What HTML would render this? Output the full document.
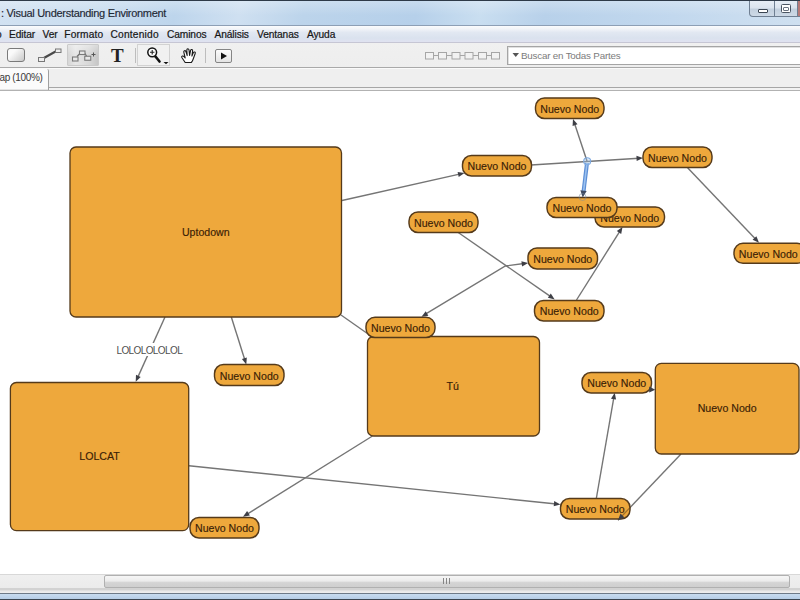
<!DOCTYPE html>
<html><head><meta charset="utf-8">
<style>
*{margin:0;padding:0;box-sizing:border-box}
html,body{width:800px;height:600px;overflow:hidden;background:#fff;font-family:"Liberation Sans",sans-serif}
.abs{position:absolute}
#title{left:0;top:0;width:800px;height:26px;background:linear-gradient(rgba(255,255,255,0.25),rgba(255,255,255,0) 60%),linear-gradient(100deg,#d2e2f2 0%,#c9ddef 12%,#bdd5ec 22%,#cfe0f1 30%,#bcd4eb 38%,#b6d0ea 52%,#c9def0 60%,#b8d1ea 68%,#c2d8ee 84%,#cfe0f0 100%);border-top:1px solid #2e3a48;border-bottom:1px solid #8d9fb5}
#title .t{left:1px;top:6px;font-size:11px;color:#1e2834;-webkit-text-stroke:0.15px #1e2834;letter-spacing:-0.3px;white-space:nowrap}
#wbtn{left:749px;top:1px;width:51px;height:16px;border:1px solid #6f7f92;border-top:none;border-radius:0 0 0 4px;background:linear-gradient(#e6edf5,#dbe4ee 45%,#c3d0de 55%,#cdd9e6)}
#menu{left:0;top:26px;width:800px;height:17px;background:linear-gradient(#fbfcfd,#f2f4f8 18%,#e2e8f2 40%,#dae2ee 75%,#e0e2f0);border-bottom:1px solid #c6c6d4}
#menu span{position:absolute;top:3px;font-size:10.2px;letter-spacing:-0.1px;color:#161616;-webkit-text-stroke:0.2px #161616;white-space:nowrap}
#tool{left:0;top:43px;width:800px;height:25px;background:linear-gradient(#f0f0f0,#eeeeee);border-bottom:1px solid #a9a9a9}
#tabs{left:0;top:68px;width:800px;height:23px;background:linear-gradient(#fafafa 0,#fafafa 1px,#efefef 1px,#efefef 19px,#a6a6a6 19px,#a6a6a6 20px,#f2f2f2 20px,#f2f2f2 22px,#b2b2b2 22px)}
#canvas{left:0;top:91px;width:800px;height:483px;background:#fff}
#hscroll{left:0;top:574px;width:800px;height:16px;background:linear-gradient(#d8d8d8 0,#d8d8d8 1px,#efefef 1px,#ebebeb 14px,#d2d2d2 14px)}
#bottom{left:0;top:590px;width:800px;height:10px;background:linear-gradient(#d6d6d6 0,#e8e8e8 1px,#eeeeee 3px,#6e7a88 3px,#6e7a88 4px,#c8dcf0 4px,#b6cde6 9px,#3a4550 9px)}
.nt{font-size:10.6px;fill:#3a2106;stroke:#3a2106;stroke-width:0.15;text-anchor:middle;font-family:"Liberation Sans",sans-serif}
.lt{font-size:10px;letter-spacing:-0.6px;fill:#505050;text-anchor:middle;font-family:"Liberation Sans",sans-serif}
</style></head>
<body>
<div id="title" class="abs"><div class="t abs">: Visual Understanding Environment</div></div>
<div id="wbtn" class="abs">
 <div class="abs" style="left:24px;top:0;width:1px;height:15px;background:#6f7f92"></div>
 <div class="abs" style="left:47px;top:0;width:1px;height:15px;background:#6f7f92"></div>
 <div class="abs" style="left:48px;top:0;width:3px;height:15px;background:#b87a78"></div>
 <div class="abs" style="left:8px;top:8px;width:10px;height:4px;border:1px solid #3a4552;background:#fff;border-radius:1px"></div>
 <div class="abs" style="left:31px;top:3px;width:10px;height:9px;border:1.5px solid #4a5562;background:#fff;border-radius:1.5px"><div class="abs" style="left:0.5px;top:2px;width:6px;height:3.5px;border:1px solid #6a7482;border-radius:1px"></div></div>
</div>
<div id="menu" class="abs">
<span style="left:-4px">o</span>
<span style="left:9px">Editar</span>
<span style="left:42.5px">Ver</span>
<span style="left:64.3px;letter-spacing:0.15px">Formato</span>
<span style="left:110.5px;letter-spacing:0.2px">Contenido</span>
<span style="left:167px">Caminos</span>
<span style="left:214.5px">Análisis</span>
<span style="left:257px">Ventanas</span>
<span style="left:307px">Ayuda</span>
</div>
<div id="tool" class="abs">
 <!-- rect icon -->
 <div class="abs" style="left:7px;top:5px;width:18px;height:14px;border:1px solid #7a7a7a;border-radius:3px;background:linear-gradient(135deg,#fafafa 30%,#c8c8c8)"></div>
 <!-- link icon -->
 <svg class="abs" style="left:36px;top:3px" width="28" height="20" viewBox="0 0 28 20">
  <line x1="7" y1="12.5" x2="20" y2="5.3" stroke="#4a4a4a" stroke-width="2.2"/>
  <rect x="2.5" y="11.5" width="6" height="4" fill="#eee" stroke="#777" stroke-width="1"/>
  <rect x="19.5" y="3" width="5.5" height="3.5" fill="#eee" stroke="#777" stroke-width="1"/>
 </svg>
 <!-- pressed button -->
 <div class="abs" style="left:67px;top:1px;width:32px;height:22px;background:linear-gradient(180deg,rgba(255,255,255,0.35),rgba(255,255,255,0) 50%),linear-gradient(90deg,#d6d6d6,#e6e6e6 25%,#d8d8d8 70%,#c6c6c6);border:1px solid #cacaca;border-radius:1px"></div>
 <svg class="abs" style="left:67px;top:1px" width="32" height="22" viewBox="0 0 32 22">
  <line x1="10" y1="12.5" x2="13.5" y2="9" stroke="#707070" stroke-width="1.3"/>
  <line x1="17.5" y1="9" x2="19.5" y2="12" stroke="#707070" stroke-width="1.3"/>
  <rect x="5.5" y="13" width="5.5" height="4" fill="#e8e8e8" stroke="#7a7a7a" stroke-width="1.1"/>
  <rect x="12.5" y="7" width="5.5" height="3.5" fill="#e8e8e8" stroke="#7a7a7a" stroke-width="1.1"/>
  <rect x="17.75" y="12.25" width="6" height="4" fill="#e8e8e8" stroke="#7a7a7a" stroke-width="1.1"/>
  <path d="M24.5 10.5h4M26.5 8.5v4" stroke="#555" stroke-width="1"/>
 </svg>
 <!-- T -->
 <div class="abs" style="left:111px;top:1.5px;font-family:'Liberation Serif',serif;font-weight:bold;font-size:19px;color:#222">T</div>
 <div class="abs" style="left:135px;top:5px;width:1px;height:15px;background:#bdbdbd"></div>
 <!-- zoom button -->
 <div class="abs" style="left:137px;top:1px;width:33px;height:22px;border:1px solid #d2d2d2;background:#f1f1f1"></div>
 <svg class="abs" style="left:137px;top:1px" width="33" height="22" viewBox="0 0 33 22">
  <line x1="18.5" y1="12.5" x2="22.5" y2="17.5" stroke="#111" stroke-width="2.6" stroke-linecap="round"/>
  <circle cx="15.2" cy="8.3" r="4.4" fill="#fafafa" stroke="#111" stroke-width="1.5"/>
  <path d="M13 8.3h4.4M15.2 6.1v4.4" stroke="#222" stroke-width="1.1"/>
  <path d="M26.5 18h5l-2.5 2.3z" fill="#111"/>
 </svg>
 <!-- hand -->
 <svg class="abs" style="left:180px;top:5px" width="18" height="16" viewBox="0 0 18 16">
  <path d="M5.2 14.5 L2 9.8 Q1.2 8.4 2.4 8 Q3.4 7.7 4.3 8.9 L5.2 10 L3.8 4.2 Q3.5 3 4.5 2.7 Q5.5 2.5 5.9 3.6 L7.2 7.6 L6.8 2 Q6.8 0.9 7.8 0.8 Q8.8 0.8 9 1.9 L9.6 7.4 L10.6 2.3 Q10.9 1.3 11.9 1.5 Q12.8 1.8 12.6 2.9 L11.9 8 L13.4 4.6 Q13.9 3.7 14.8 4.1 Q15.6 4.5 15.2 5.5 L13.2 11 Q12.5 13.3 11.3 14.5 Z" fill="#fff" stroke="#1a1a1a" stroke-width="1.1" stroke-linejoin="round"/>
 </svg>
 <div class="abs" style="left:205px;top:5px;width:1px;height:15px;background:#bdbdbd"></div>
 <!-- play -->
 <div class="abs" style="left:215px;top:6px;width:17px;height:14px;border:1px solid #858585;border-radius:2px;background:linear-gradient(#fbfbfb,#e4e4e4)"></div>
 <svg class="abs" style="left:215px;top:6px" width="17" height="14" viewBox="0 0 17 14"><path d="M6 3.5v7l6-3.5z" fill="#111"/></svg>
 <!-- chain -->
 <svg class="abs" style="left:424px;top:7px" width="80" height="12" viewBox="0 0 80 12">
  <g fill="#f2f2f2" stroke="#a6a6a6" stroke-width="1">
  <rect x="1.5" y="2.5" width="8" height="6.5"/><rect x="14.5" y="2.5" width="8" height="6.5"/><rect x="28" y="2.5" width="8" height="6.5"/><rect x="41" y="2.5" width="8" height="6.5"/><rect x="54.5" y="2.5" width="8" height="6.5"/><rect x="67.5" y="2.5" width="8" height="6.5"/>
  </g>
  <path d="M9.5 5.5h5M22.5 5.5h5.5M36 5.5h5M49 5.5h5.5M62.5 5.5h5" stroke="#a6a6a6" stroke-width="1"/>
 </svg>
 <!-- search -->
 <div class="abs" style="left:507px;top:3px;width:300px;height:19px;border:1px solid #a5a5a5;border-right:none;background:#fff;box-shadow:inset 1px 1px 0 #e0e0e0"></div>
 <svg class="abs" style="left:512px;top:9px" width="8" height="6" viewBox="0 0 8 6"><path d="M0.5 1h6.5l-3.25 4z" fill="#555"/></svg>
 <div class="abs" style="left:521px;top:7px;font-size:9.8px;letter-spacing:-0.2px;color:#7c7c7c;white-space:nowrap">Buscar en Todas Partes</div>
</div>
<div id="tabs" class="abs">
 <div class="abs" style="left:0;top:1px;width:49px;height:21px;background:linear-gradient(#fbfbfb 0,#fbfbfb 20px,#e4e4e4 20px);border-right:1px solid #a0a0a0;border-top-right-radius:2px"></div>
 <div class="abs" style="left:-0.5px;top:4px;font-size:10px;letter-spacing:-0.35px;color:#3a3a3a;white-space:nowrap">ap (100%)</div>
</div>
<div id="canvas" class="abs"></div>
<!--SVG-->
<svg class="abs" style="left:0;top:0" width="800" height="600" viewBox="0 0 800 600">
<line x1="342.0" y1="200.5" x2="460.6" y2="173.9" stroke="#757575" stroke-width="1.4"/><polygon points="464.5,173.0 458.7,177.0 457.6,171.9" fill="#3e3f46"/>
<line x1="531.0" y1="165.0" x2="639.0" y2="158.2" stroke="#757575" stroke-width="1.4"/><polygon points="643.0,158.0 636.7,161.0 636.4,155.8" fill="#3e3f46"/>
<line x1="587.0" y1="161.0" x2="574.3" y2="122.8" stroke="#757575" stroke-width="1.4"/><polygon points="573.0,119.0 577.5,124.3 572.6,126.0" fill="#3e3f46"/>
<line x1="687.6" y1="167.8" x2="756.2" y2="239.8" stroke="#757575" stroke-width="1.4"/><polygon points="759.0,242.7 752.6,239.8 756.4,236.2" fill="#3e3f46"/>
<line x1="457.5" y1="232.0" x2="551.4" y2="297.1" stroke="#757575" stroke-width="1.4"/><polygon points="554.7,299.4 547.9,297.8 550.8,293.6" fill="#3e3f46"/>
<line x1="576.5" y1="300.0" x2="620.4" y2="230.4" stroke="#757575" stroke-width="1.4"/><polygon points="622.5,227.0 621.2,233.9 616.8,231.1" fill="#3e3f46"/>
<polyline points="425,314.3 505.4,266 524,263.5" fill="none" stroke="#757575" stroke-width="1.4"/>
<polygon points="421.5,316.8 425.7,311.2 428.4,315.7" fill="#3e3f46"/>
<polygon points="528.2,262.9 522.1,266.4 521.4,261.2" fill="#3e3f46"/>
<line x1="341.0" y1="315.0" x2="369.5" y2="335.0" stroke="#757575" stroke-width="1.4"/>
<line x1="165.0" y1="317.0" x2="137.4" y2="378.1" stroke="#757575" stroke-width="1.4"/><polygon points="135.7,381.7 136.0,374.7 140.7,376.9" fill="#3e3f46"/>
<line x1="231.3" y1="317.0" x2="245.1" y2="360.7" stroke="#757575" stroke-width="1.4"/><polygon points="246.3,364.5 241.9,359.1 246.8,357.5" fill="#3e3f46"/>
<line x1="372.5" y1="436.0" x2="246.4" y2="514.6" stroke="#757575" stroke-width="1.4"/><polygon points="243.0,516.7 247.1,511.1 249.9,515.5" fill="#3e3f46"/>
<line x1="189.0" y1="465.7" x2="556.4" y2="504.0" stroke="#757575" stroke-width="1.4"/><polygon points="560.4,504.4 553.7,506.3 554.2,501.1" fill="#3e3f46"/>
<line x1="596.4" y1="498.0" x2="614.0" y2="396.7" stroke="#757575" stroke-width="1.4"/><polygon points="614.7,392.8 616.1,399.6 611.0,398.8" fill="#3e3f46"/>
<line x1="681.0" y1="454.0" x2="618.0" y2="520.2" stroke="#757575" stroke-width="1.4"/>
<rect x="70" y="147" width="271.5" height="170" rx="6" ry="6" fill="#eea83c" stroke="#553a1a" stroke-width="1.3"/>
<text x="205.75" y="236.3" class="nt">Uptodown</text>
<rect x="10.4" y="382.5" width="178.29999999999998" height="148.10000000000002" rx="6" ry="6" fill="#eea83c" stroke="#553a1a" stroke-width="1.3"/>
<text x="99.55" y="460.25" class="nt">LOLCAT</text>
<rect x="367.5" y="336.5" width="172.0" height="99.5" rx="6" ry="6" fill="#eea83c" stroke="#553a1a" stroke-width="1.3"/>
<text x="452.7" y="389.85" class="nt">Tú</text>
<rect x="655.3" y="363.4" width="143.70000000000005" height="90.60000000000002" rx="6" ry="6" fill="#eea83c" stroke="#553a1a" stroke-width="1.3"/>
<text x="727.15" y="412.4" class="nt">Nuevo Nodo</text>
<rect x="535.5" y="98" width="68.5" height="20.5" rx="9" ry="9" fill="#eea83c" stroke="#553a1a" stroke-width="1.45"/>
<text x="569.75" y="112.85" class="nt">Nuevo Nodo</text>
<rect x="462.5" y="155.5" width="69.0" height="20.5" rx="9" ry="9" fill="#eea83c" stroke="#553a1a" stroke-width="1.45"/>
<text x="497.0" y="170.35" class="nt">Nuevo Nodo</text>
<rect x="643" y="147" width="69" height="20.5" rx="9" ry="9" fill="#eea83c" stroke="#553a1a" stroke-width="1.45"/>
<text x="677.5" y="161.85" class="nt">Nuevo Nodo</text>
<rect x="595" y="207" width="69.5" height="20" rx="9" ry="9" fill="#eea83c" stroke="#553a1a" stroke-width="1.45"/>
<text x="629.75" y="221.6" class="nt">Nuevo Nodo</text>
<rect x="547" y="197.5" width="70" height="20.0" rx="9" ry="9" fill="#eea83c" stroke="#553a1a" stroke-width="1.45"/>
<text x="582.0" y="212.1" class="nt">Nuevo Nodo</text>
<rect x="409" y="212" width="69" height="20.5" rx="9" ry="9" fill="#eea83c" stroke="#553a1a" stroke-width="1.45"/>
<text x="443.5" y="226.85" class="nt">Nuevo Nodo</text>
<rect x="528" y="248" width="69.5" height="21" rx="9" ry="9" fill="#eea83c" stroke="#553a1a" stroke-width="1.45"/>
<text x="562.75" y="263.1" class="nt">Nuevo Nodo</text>
<rect x="534.5" y="300.5" width="69.5" height="20.5" rx="9" ry="9" fill="#eea83c" stroke="#553a1a" stroke-width="1.45"/>
<text x="569.25" y="315.35" class="nt">Nuevo Nodo</text>
<rect x="734" y="243.3" width="72" height="20.0" rx="9" ry="9" fill="#eea83c" stroke="#553a1a" stroke-width="1.45"/>
<text x="768.3" y="257.90000000000003" class="nt">Nuevo Nodo</text>
<rect x="214.5" y="364.5" width="69.5" height="21.0" rx="9" ry="9" fill="#eea83c" stroke="#553a1a" stroke-width="1.45"/>
<text x="249.25" y="379.6" class="nt">Nuevo Nodo</text>
<rect x="582" y="372.5" width="69.5" height="20.5" rx="9" ry="9" fill="#eea83c" stroke="#553a1a" stroke-width="1.45"/>
<text x="616.75" y="387.35" class="nt">Nuevo Nodo</text>
<rect x="190" y="517.5" width="69" height="20.5" rx="9" ry="9" fill="#eea83c" stroke="#553a1a" stroke-width="1.45"/>
<text x="224.5" y="532.35" class="nt">Nuevo Nodo</text>
<rect x="560.5" y="498.5" width="69.5" height="20.5" rx="9" ry="9" fill="#eea83c" stroke="#553a1a" stroke-width="1.45"/>
<text x="595.25" y="513.35" class="nt">Nuevo Nodo</text>
<rect x="366" y="317.3" width="69" height="20.19999999999999" rx="9" ry="9" fill="#eea83c" stroke="#553a1a" stroke-width="1.45"/>
<text x="400.5" y="332.0" class="nt">Nuevo Nodo</text>
<polygon points="655.2,389.7 649.2,392.6 649.2,386.6" fill="#3e3f46"/>
<line x1="630" y1="507.6" x2="622" y2="516" stroke="rgba(70,45,20,0.45)" stroke-width="1.2"/>
<polygon points="618.0,520.2 620.5,513.6 624.5,517.4" fill="#3e3f46"/>
<rect x="115" y="343" width="68" height="13" fill="#fff"/>
<text x="149.3" y="354" class="lt">LOLOLOLOLOL</text>
<line x1="587" y1="163" x2="583.6" y2="191" stroke="#5d8fd6" stroke-width="4"/>
<line x1="587" y1="163" x2="583.6" y2="191" stroke="#9cc2f0" stroke-width="1.6"/>
<polygon points="582.7,197.5 580.4,190.2 586.7,190.9" fill="#3f4a60"/>
<circle cx="587.2" cy="161.3" r="3.5" fill="rgba(160,200,240,0.35)" stroke="#7fabe2" stroke-width="1.1"/>
<circle cx="582.5" cy="197" r="3.5" fill="none" stroke="rgba(120,140,160,0.5)" stroke-width="1"/>
</svg>
<!--/SVG-->
<div id="hscroll" class="abs">
 <div class="abs" style="left:103.5px;top:1px;width:686px;height:13px;border:1px solid #b0b0b0;border-radius:2px;background:linear-gradient(#f6f6f6,#ececec 45%,#d4d4d4 60%,#cfcfcf)"></div>
 <div class="abs" style="left:443px;top:4px;width:8px;height:6px;background:repeating-linear-gradient(90deg,#858585 0,#858585 1.2px,transparent 1.2px,transparent 3px)"></div>
</div>
<div id="bottom" class="abs"></div>
</body></html>
